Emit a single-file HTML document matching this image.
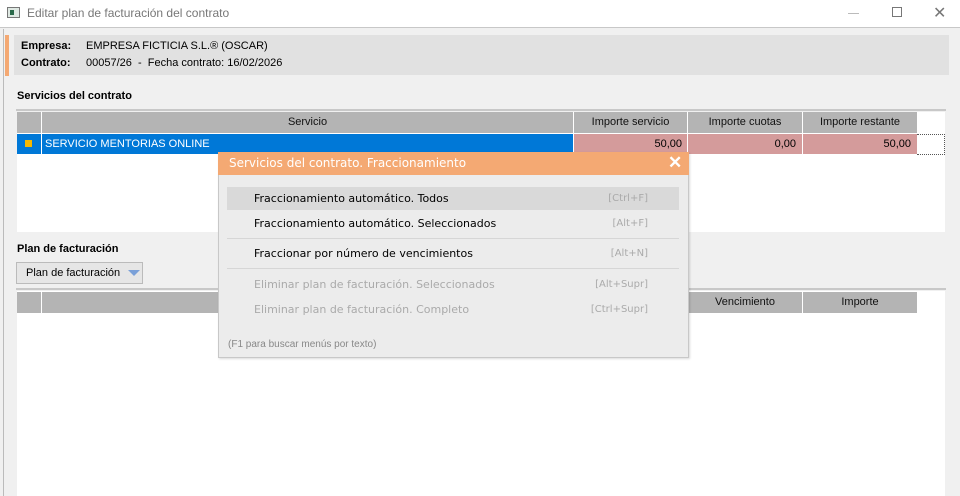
<!DOCTYPE html>
<html><head><meta charset="utf-8"><style>
*{margin:0;padding:0;box-sizing:border-box}
body{width:960px;height:496px;overflow:hidden;background:#f0f0f0;font-family:"Liberation Sans",sans-serif;font-size:11px;color:#000;position:relative}
.a{position:absolute}
.title{left:0;top:0;width:960px;height:28px;background:#fff;border-bottom:1px solid #c8c8c8}
.hd{background:#b4b4b4;height:21px;line-height:21px;text-align:center;font-size:11px;color:#111}
.m{font-family:"DejaVu Sans",sans-serif;font-size:11px}
.sc{font-family:"DejaVu Sans",sans-serif;font-size:10px;color:#aaa;text-align:right}
</style></head><body>
<div class="a title"></div>
<div class="a" style="left:7px;top:7px;width:13px;height:11px;border:1px solid #777;background:#dfe9e3"><div style="margin:2px;width:4px;height:5px;background:#2a6a4a"></div></div>
<div class="a" style="left:27px;top:6px;font-size:12px;color:#777">Editar plan de facturación del contrato</div>
<div class="a" style="left:848px;top:13px;width:11px;height:1px;background:#bbb"></div>
<div class="a" style="left:892px;top:7px;width:10px;height:10px;border:1px solid #777"></div>
<div class="a" style="left:933px;top:3px;font-size:16px;color:#777">✕</div>
<div class="a" style="left:3px;top:29px;width:1px;height:467px;background:#bbb"></div>
<div class="a" style="left:5px;top:35px;width:4px;height:41px;background:#f4a973"></div>
<div class="a" style="left:14px;top:35px;width:935px;height:40px;background:#e1e1e1"></div>
<div class="a" style="left:21px;top:40px;font-weight:bold">Empresa:</div>
<div class="a" style="left:86px;top:40px">EMPRESA FICTICIA S.L.® (OSCAR)</div>
<div class="a" style="left:21px;top:57px;font-weight:bold">Contrato:</div>
<div class="a" style="left:86px;top:57px">00057/26 &nbsp;- &nbsp;Fecha contrato: 16/02/2026</div>
<div class="a" style="left:17px;top:90px;font-weight:bold">Servicios del contrato</div>
<div class="a" style="left:16px;top:109px;width:930px;height:2px;background:#c8c8c8"></div>
<div class="a" style="left:17px;top:112px;width:928px;height:120px;background:#fff"></div>
<div class="a hd" style="left:17px;top:112px;width:24px"></div>
<div class="a hd" style="left:42px;top:112px;width:531px">Servicio</div>
<div class="a hd" style="left:574px;top:112px;width:113px">Importe servicio</div>
<div class="a hd" style="left:688px;top:112px;width:114px">Importe cuotas</div>
<div class="a hd" style="left:803px;top:112px;width:114px">Importe restante</div>
<div class="a" style="left:17px;top:134px;width:24px;height:20px;background:#0078d7"><div style="margin:6px 0 0 8px;width:7px;height:7px;background:#f5b800"></div></div>
<div class="a" style="left:42px;top:134px;width:531px;height:20px;background:#0078d7;color:#fff;line-height:20px;padding-left:3px">SERVICIO MENTORIAS ONLINE</div>
<div class="a" style="left:574px;top:134px;width:113px;height:20px;background:#d49b9b;line-height:20px;text-align:right;padding-right:5px">50,00</div>
<div class="a" style="left:688px;top:134px;width:114px;height:20px;background:#d49b9b;line-height:20px;text-align:right;padding-right:6px">0,00</div>
<div class="a" style="left:803px;top:134px;width:114px;height:20px;background:#d49b9b;line-height:20px;text-align:right;padding-right:6px">50,00</div>
<div class="a" style="left:917px;top:134px;width:28px;height:21px;border:1px dotted #555;border-left:none"></div>
<div class="a" style="left:17px;top:243px;font-weight:bold">Plan de facturación</div>
<div class="a" style="left:16px;top:262px;width:127px;height:22px;background:#e6e6e6;border:1px solid #bbb;line-height:20px;padding-left:9px">Plan de facturación <span style="display:inline-block;margin-left:5px;width:0;height:0;border-left:6px solid transparent;border-right:6px solid transparent;border-top:6px solid #7aa0d8;vertical-align:middle"></span></div>
<div class="a" style="left:16px;top:288px;width:930px;height:2px;background:#c8c8c8"></div>
<div class="a" style="left:17px;top:291px;width:928px;height:205px;background:#fff"></div>
<div class="a hd" style="left:17px;top:292px;width:24px"></div>
<div class="a hd" style="left:42px;top:292px;width:645px"></div>
<div class="a hd" style="left:688px;top:292px;width:114px">Vencimiento</div>
<div class="a hd" style="left:803px;top:292px;width:114px">Importe</div>
<div class="a" style="left:218px;top:152px;width:471px;height:206px;background:#ececec;border:1px solid #c8c8c8;box-shadow:1px 1px 2px rgba(0,0,0,.15)"></div>
<div class="a m" style="left:218px;top:152px;width:471px;height:23px;background:#f4a973;color:#fff;font-size:12px;line-height:23px;padding-left:11px">Servicios del contrato. Fraccionamiento</div>
<div class="a" style="left:668px;top:153px;color:#fff;font-size:17px;font-weight:bold">✕</div>
<div class="a" style="left:227px;top:187px;width:452px;height:23px;background:#d9d9d9"></div>
<div class="a m" style="left:254px;top:192px">Fraccionamiento automático. Todos</div>
<div class="a sc" style="left:560px;top:193px;width:88px">[Ctrl+F]</div>
<div class="a m" style="left:254px;top:217px">Fraccionamiento automático. Seleccionados</div>
<div class="a sc" style="left:560px;top:218px;width:88px">[Alt+F]</div>
<div class="a" style="left:227px;top:238px;width:452px;height:1px;background:#d6d6d6"></div>
<div class="a m" style="left:254px;top:247px">Fraccionar por número de vencimientos</div>
<div class="a sc" style="left:560px;top:248px;width:88px">[Alt+N]</div>
<div class="a" style="left:227px;top:268px;width:452px;height:1px;background:#d6d6d6"></div>
<div class="a m" style="left:254px;top:278px;color:#aaa">Eliminar plan de facturación. Seleccionados</div>
<div class="a sc" style="left:560px;top:279px;width:88px">[Alt+Supr]</div>
<div class="a m" style="left:254px;top:303px;color:#aaa">Eliminar plan de facturación. Completo</div>
<div class="a sc" style="left:560px;top:304px;width:88px">[Ctrl+Supr]</div>
<div class="a" style="left:228px;top:339px;font-size:10px;color:#888">(F1 para buscar menús por texto)</div>
</body></html>
